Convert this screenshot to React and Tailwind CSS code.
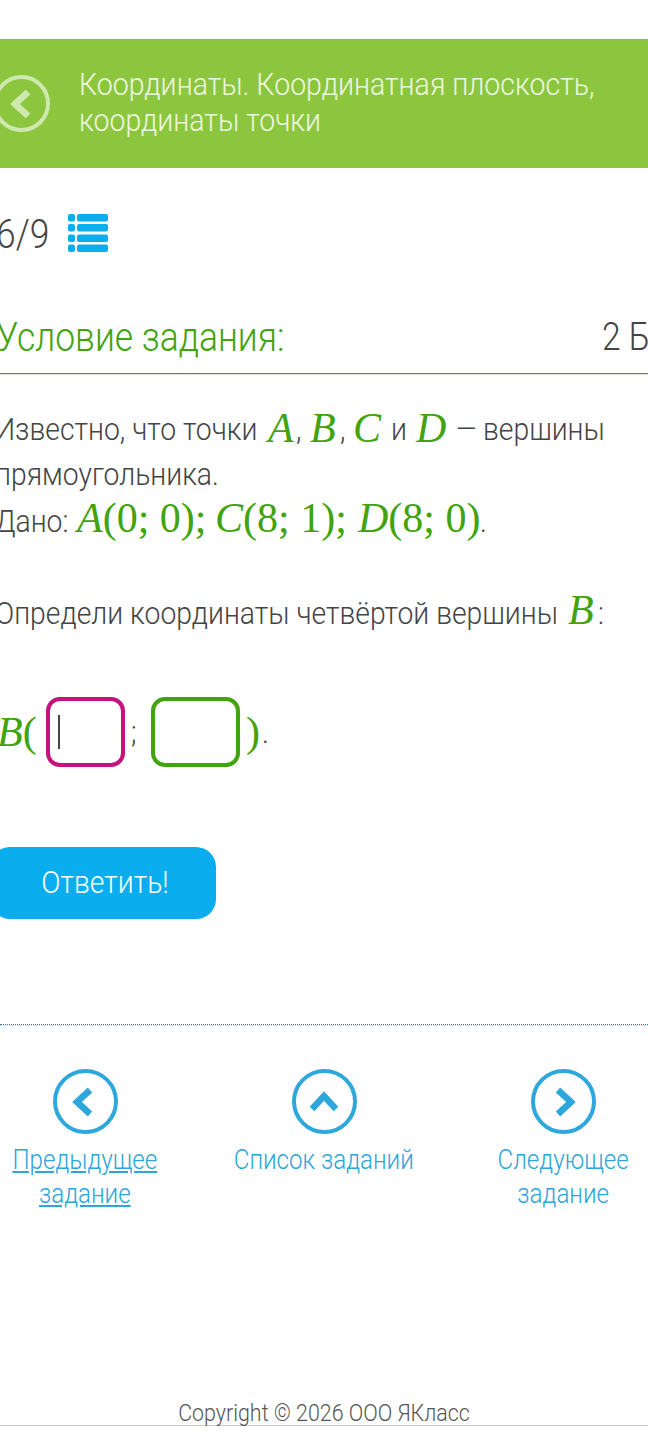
import React from "react";
import { twMerge } from "tailwind-merge";

// the reference font is narrower than Roboto, so text runs get squeezed
const T = ({ className, children }) => (
  <span className={twMerge("inline-block shrink-0 origin-left scale-x-[0.885] whitespace-nowrap", className)}>{children}</span>
);

const M = ({ className, children }) => (
  <span className={twMerge("inline-block shrink-0 whitespace-nowrap font-['Liberation_Serif',serif] text-[42px] leading-none font-normal text-[#41a30d]", className)}>
    {children}
  </span>
);

const I = ({ children }) => <i>{children}</i>;

const Line = ({ className, children }) => (
  <div className={twMerge("flex h-[45px] items-baseline leading-[45px]", className)}>{children}</div>
);

const NavItem = ({ d, underline, children }) => (
  <div className="flex w-[180px] flex-col items-center">
    <div className="flex h-[65px] w-[65px] items-center justify-center rounded-full border-[4px] border-[#2ea8dc]">
      <svg viewBox="0 0 32 32" className="h-[32px] w-[32px]" fill="none">
        <path d={d} stroke="#2ea8dc" strokeWidth="6.5" />
      </svg>
    </div>
    <a className={twMerge("mt-[9px] scale-x-[0.885] whitespace-nowrap text-center text-[27.3px] leading-[34px] text-[#2ba5da]", underline && "underline")}>
      {children}
    </a>
  </div>
);

export default function App() {
  return (
    <div className="h-[1440px] w-[648px] overflow-hidden bg-white font-['Roboto',sans-serif] text-[32px] font-light text-[#444]">
      {/* header */}
      <div className="mt-[39px] flex h-[129px] items-center gap-[29px] bg-[#8cc63f] text-[32px] leading-[36px] text-[#eef7e0]">
        <div className="ml-[-7px] flex h-[57px] w-[57px] shrink-0 items-center justify-center rounded-full border-[4px] border-[#cfe8ae]">
          <svg viewBox="0 0 32 32" className="h-[32px] w-[32px]" fill="none">
            <path d="M22 4 L9 16 L22 28" stroke="#cfe8ae" strokeWidth="6.5" />
          </svg>
        </div>
        <T className="mb-[4px] scale-x-[0.89]">Координаты. Координатная плоскость,<br />координаты точки</T>
      </div>

      {/* counter */}
      <div className="ml-[-4px] mt-[44px] flex h-[42px] items-center text-[40px]">
        <T className="mt-[4px] w-[72px]">6/9</T>
        <svg viewBox="0 0 40 38" className="h-[38px] w-[40px]" fill="#0aaeef">
          <rect x="0" y="0" width="7" height="7.5" rx="2" />
          <rect x="9" y="0" width="31" height="7.5" rx="2" />
          <rect x="0" y="10" width="7" height="7.5" rx="2" />
          <rect x="9" y="10" width="31" height="7.5" rx="2" />
          <rect x="0" y="20.5" width="7" height="7.5" rx="2" />
          <rect x="9" y="20.5" width="31" height="7.5" rx="2" />
          <rect x="0" y="30.5" width="7" height="7.5" rx="2" />
          <rect x="9" y="30.5" width="31" height="7.5" rx="2" />
        </svg>
      </div>

      {/* title */}
      <div className="mt-[52px] flex h-[68px] items-center border-b border-[#4d9a26] pb-[4px] shadow-[0_1px_0_#cfe8bf]">
        <T className="ml-[-4px] w-[606px] text-[40px] text-[#41a30d]">Условие задания:</T>
        <T className="text-[38px]">2 Б</T>
      </div>

      {/* text */}
      <div className="ml-[-5px] mt-[33px]">
        <Line>
          <T className="w-[273px] -translate-y-[2px]">Известно, что точки</T>
          <M className="w-[28px]"><I>A</I></M>
          <T className="w-[14px] -translate-y-[2px]">,</T>
          <M className="w-[30px]"><I>B</I></M>
          <T className="w-[13px] -translate-y-[2px]">,</T>
          <M className="w-[38px]"><I>C</I></M>
          <T className="w-[25px] -translate-y-[2px]">и</T>
          <M className="w-[39px]"><I>D</I></M>
          <T className="w-[28px] -translate-y-[2px] scale-x-[1.1]">–</T>
          <T className="-translate-y-[2px]">вершины</T>
        </Line>
        <Line><T>прямоугольника.</T></Line>
        <Line>
          <T className="w-[82px]">Дано:</T>
          <M className="w-[138px]"><I>A</I>(0; 0);</M>
          <M className="w-[143px]"><I>C</I>(8; 1);</M>
          <M className="w-[122px]"><I>D</I>(8; 0)</M>
          <T>.</T>
        </Line>
        <Line className="mt-[47px]">
          <T className="w-[573px]">Определи координаты четвёртой вершины</T>
          <M className="w-[30px]"><I>B</I></M>
          <T>:</T>
        </Line>
      </div>

      {/* answer */}
      <div className="ml-[-3px] mt-[63px] flex h-[70px] items-center">
        <M className="w-[49px]"><I>B</I>(</M>
        <div className="flex h-[70px] w-[79px] items-center rounded-[14px] border-[4px] border-[#c5127f] pl-[8px]">
          <div className="h-[34px] w-[2px] bg-[#444]" />
        </div>
        <T className="ml-[6px] w-[20px]">;</T>
        <div className="h-[70px] w-[89px] rounded-[14px] border-[4px] border-[#41a30d]" />
        <M className="ml-[6px] w-[16px]">)</M>
        <T>.</T>
      </div>

      {/* button */}
      <button className="ml-[-10px] mt-[80px] flex h-[72px] w-[226px] items-center justify-center rounded-[20px] bg-[#0aaeef] pb-[3px] pl-[3px] text-[32px] text-white">
        <span className="scale-x-[0.885]">Ответить!</span>
      </button>

      {/* nav */}
      <div className="mt-[105px] border-t border-dotted border-[#1e7fc0] pt-[44px] shadow-[inset_0_1px_0_#d6ecf8]">
        <div className="mx-[-5px] flex justify-between">
          <NavItem d="M21 4 L8 16 L21 28" underline>Предыдущее<br />задание</NavItem>
          <NavItem d="M4 23 L16 10 L28 23">Список заданий</NavItem>
          <NavItem d="M11 4 L24 16 L11 28">Следующее<br />задание</NavItem>
        </div>
      </div>

      {/* footer */}
      <div className="mt-[187px] h-[28px] border-b border-[#ccc] text-center text-[24.2px] leading-[30px] text-[#555]">
        <div className="scale-x-[0.885]">Copyright © 2026 ООО ЯКласс</div>
      </div>
    </div>
  );
}
